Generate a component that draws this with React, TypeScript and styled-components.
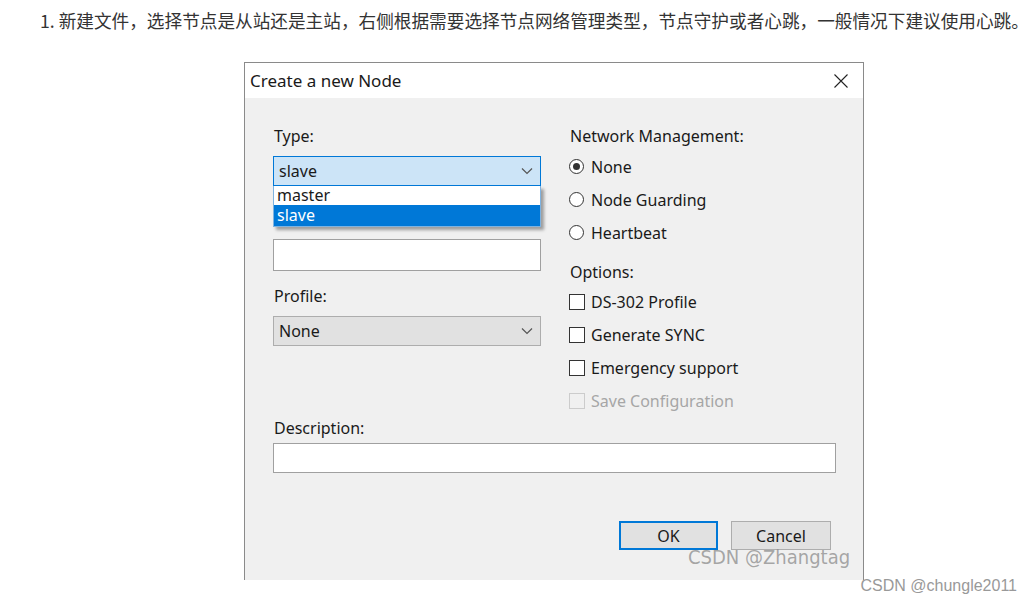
import React from "react";
import styled, { createGlobalStyle } from "styled-components";

const GlobalStyle = createGlobalStyle`
  html, body { margin: 0; padding: 0; background: #fff; }
  body { width: 1032px; height: 606px; overflow: hidden; }
`;

const Page = styled.div`
  position: relative;
  width: 1032px;
  height: 606px;
  background: #fff;
  overflow: hidden;
`;

const Intro = styled.p`
  margin: 0;
  padding: 10px 0 0 40px;
  font-family: "Noto Sans CJK SC", sans-serif;
  font-size: 17.65px;
  line-height: 22px;
  color: #333;
  white-space: nowrap;
`;

const Dialog = styled.section`
  margin: 30px 0 0 244px;
  width: 620px;
  height: 518px;
  box-sizing: border-box;
  border: 1px solid #8a8a8a;
  border-bottom: none;
  background: #f0f0f0;
  display: flex;
  flex-direction: column;
  font-family: "Noto Sans", sans-serif;
  font-size: 16px;
  color: #1a1a1a;
`;

const TitleBar = styled.header`
  height: 35px;
  flex: none;
  background: #fff;
  display: flex;
  align-items: center;
  justify-content: space-between;
  padding: 0 15px 0 5px;
`;

const Title = styled.h1`
  margin: 0;
  font-weight: 400;
  font-size: 17px;
  line-height: 20px;
`;

const CloseIcon = styled.svg`
  width: 14px;
  height: 14px;
  display: block;
`;

const Body = styled.div`
  padding: 28px 0 0 28px;
  display: flex;
  flex-direction: column;
`;

const Columns = styled.div`
  display: grid;
  grid-template-columns: 268px 267px;
  column-gap: 28px;
  align-items: start;
`;

const Column = styled.div`
  display: flex;
  flex-direction: column;
`;

const Label = styled.div<{ $top?: number; $bottom?: number }>`
  height: 20px;
  line-height: 20px;
  padding-left: 1px;
  margin-top: ${(p) => p.$top ?? 0}px;
  margin-bottom: ${(p) => p.$bottom ?? 0}px;
  white-space: nowrap;
`;

const ComboWrap = styled.div`
  position: relative;
  z-index: 2;
`;

const Select = styled.div<{ $active?: boolean }>`
  height: 30px;
  box-sizing: border-box;
  border: 1px solid ${(p) => (p.$active ? "#0078d7" : "#adadad")};
  background: ${(p) => (p.$active ? "#cce4f7" : "#e1e1e1")};
  display: flex;
  align-items: center;
  justify-content: space-between;
  padding: 0 5px 0 5px;
`;

const Chevron = styled.svg`
  width: 12px;
  height: 8px;
  display: block;
  margin-right: 2px;
`;

const DropList = styled.ul`
  position: absolute;
  top: 100%;
  left: 0;
  right: 0;
  margin: 0;
  padding: 0;
  list-style: none;
  box-sizing: border-box;
  border: 1px solid #7fb3e0;
  border-top: none;
  background: #fff;
  box-shadow: 3px 3px 3px rgba(0, 0, 0, 0.35);
`;

const DropItem = styled.li<{ $selected?: boolean }>`
  height: ${(p) => (p.$selected ? 21 : 19)}px;
  line-height: ${(p) => (p.$selected ? 20 : 19)}px;
  padding-left: 3px;
  background: ${(p) => (p.$selected ? "#0078d7" : "#fff")};
  color: ${(p) => (p.$selected ? "#fff" : "#1a1a1a")};
`;

const TextInput = styled.div<{ $height: number; $top?: number }>`
  height: ${(p) => p.$height}px;
  margin-top: ${(p) => p.$top ?? 0}px;
  box-sizing: border-box;
  border: 1px solid #a0a0a0;
  background: #fff;
`;

const OptionRow = styled.label<{ $disabled?: boolean }>`
  height: 33px;
  display: flex;
  align-items: center;
  gap: 6px;
  color: ${(p) => (p.$disabled ? "#a6a6a6" : "#1a1a1a")};
  white-space: nowrap;
`;

const RadioMark = styled.span<{ $checked?: boolean }>`
  width: 15px;
  height: 15px;
  box-sizing: border-box;
  border-radius: 50%;
  border: 1px solid #333;
  background: #fff;
  display: flex;
  align-items: center;
  justify-content: center;
  margin-right: 1px;
  &::after {
    content: "";
    width: 7px;
    height: 7px;
    border-radius: 50%;
    background: #333;
    display: ${(p) => (p.$checked ? "block" : "none")};
  }
`;

const CheckMark = styled.span<{ $disabled?: boolean }>`
  width: 16px;
  height: 16px;
  box-sizing: border-box;
  border: 1px solid ${(p) => (p.$disabled ? "#cccccc" : "#333")};
  background: ${(p) => (p.$disabled ? "#f0f0f0" : "#fff")};
`;

const DescBlock = styled.div`
  width: 563px;
  margin-top: 1px;
  display: flex;
  flex-direction: column;
`;

const Buttons = styled.div`
  width: 563px;
  box-sizing: border-box;
  margin-top: 48px;
  padding-right: 5px;
  display: flex;
  justify-content: flex-end;
  gap: 13px;
`;

const Button = styled.button<{ $default?: boolean; $w: number }>`
  width: ${(p) => p.$w}px;
  height: 29px;
  box-sizing: border-box;
  border: ${(p) => (p.$default ? "2px solid #0078d7" : "1px solid #adadad")};
  background: #e1e1e1;
  font-family: "Noto Sans", sans-serif;
  font-size: 16px;
  color: #1a1a1a;
  padding: 0;
`;

const Watermark = styled.div`
  position: absolute;
  left: 688px;
  top: 545px;
  font-family: "DejaVu Sans", "Liberation Sans", sans-serif;
  font-stretch: condensed;
  font-size: 20px;
  line-height: 24px;
  color: rgba(140, 140, 140, 0.75);
  white-space: nowrap;
  pointer-events: none;
`;

const Credit = styled.div`
  position: absolute;
  right: 15px;
  top: 576px;
  font-family: "Liberation Sans", sans-serif;
  font-size: 16px;
  line-height: 20px;
  color: #999;
  white-space: nowrap;
`;

const ChevronIcon = () => (
  <Chevron viewBox="0 0 12 8">
    <path d="M1 1.5 L6 6.5 L11 1.5" fill="none" stroke="#555" strokeWidth="1.2" />
  </Chevron>
);

export default function App() {
  return (
    <>
      <GlobalStyle />
      <Page>
        <Intro>
          1. 新建文件，选择节点是从站还是主站，右侧根据需要选择节点网络管理类型，节点守护或者心跳，一般情况下建议使用心跳。
        </Intro>
        <Dialog>
          <TitleBar>
            <Title>Create a new Node</Title>
            <CloseIcon viewBox="0 0 14 14">
              <path d="M0.5 0.5 L13.5 13.5 M13.5 0.5 L0.5 13.5" stroke="#222" strokeWidth="1.1" />
            </CloseIcon>
          </TitleBar>
          <Body>
            <Columns>
              <Column>
                <Label $bottom={10}>Type:</Label>
                <ComboWrap>
                  <Select $active>
                    <span>slave</span>
                    <ChevronIcon />
                  </Select>
                  <DropList>
                    <DropItem>master</DropItem>
                    <DropItem $selected>slave</DropItem>
                  </DropList>
                </ComboWrap>
                <TextInput $height={32} $top={53} />
                <Label $top={15} $bottom={10}>Profile:</Label>
                <Select>
                  <span>None</span>
                  <ChevronIcon />
                </Select>
              </Column>
              <Column>
                <Label $bottom={4}>Network Management:</Label>
                <OptionRow>
                  <RadioMark $checked />
                  None
                </OptionRow>
                <OptionRow>
                  <RadioMark />
                  Node Guarding
                </OptionRow>
                <OptionRow>
                  <RadioMark />
                  Heartbeat
                </OptionRow>
                <Label $top={13} $bottom={3}>Options:</Label>
                <OptionRow>
                  <CheckMark />
                  DS-302 Profile
                </OptionRow>
                <OptionRow>
                  <CheckMark />
                  Generate SYNC
                </OptionRow>
                <OptionRow>
                  <CheckMark />
                  Emergency support
                </OptionRow>
                <OptionRow $disabled>
                  <CheckMark $disabled />
                  Save Configuration
                </OptionRow>
              </Column>
            </Columns>
            <DescBlock>
              <Label $bottom={5}>Description:</Label>
              <TextInput $height={30} />
            </DescBlock>
            <Buttons>
              <Button $default $w={99}>OK</Button>
              <Button $w={100}>Cancel</Button>
            </Buttons>
          </Body>
        </Dialog>
        <Watermark>CSDN @Zhangtag</Watermark>
        <Credit>CSDN @chungle2011</Credit>
      </Page>
    </>
  );
}
